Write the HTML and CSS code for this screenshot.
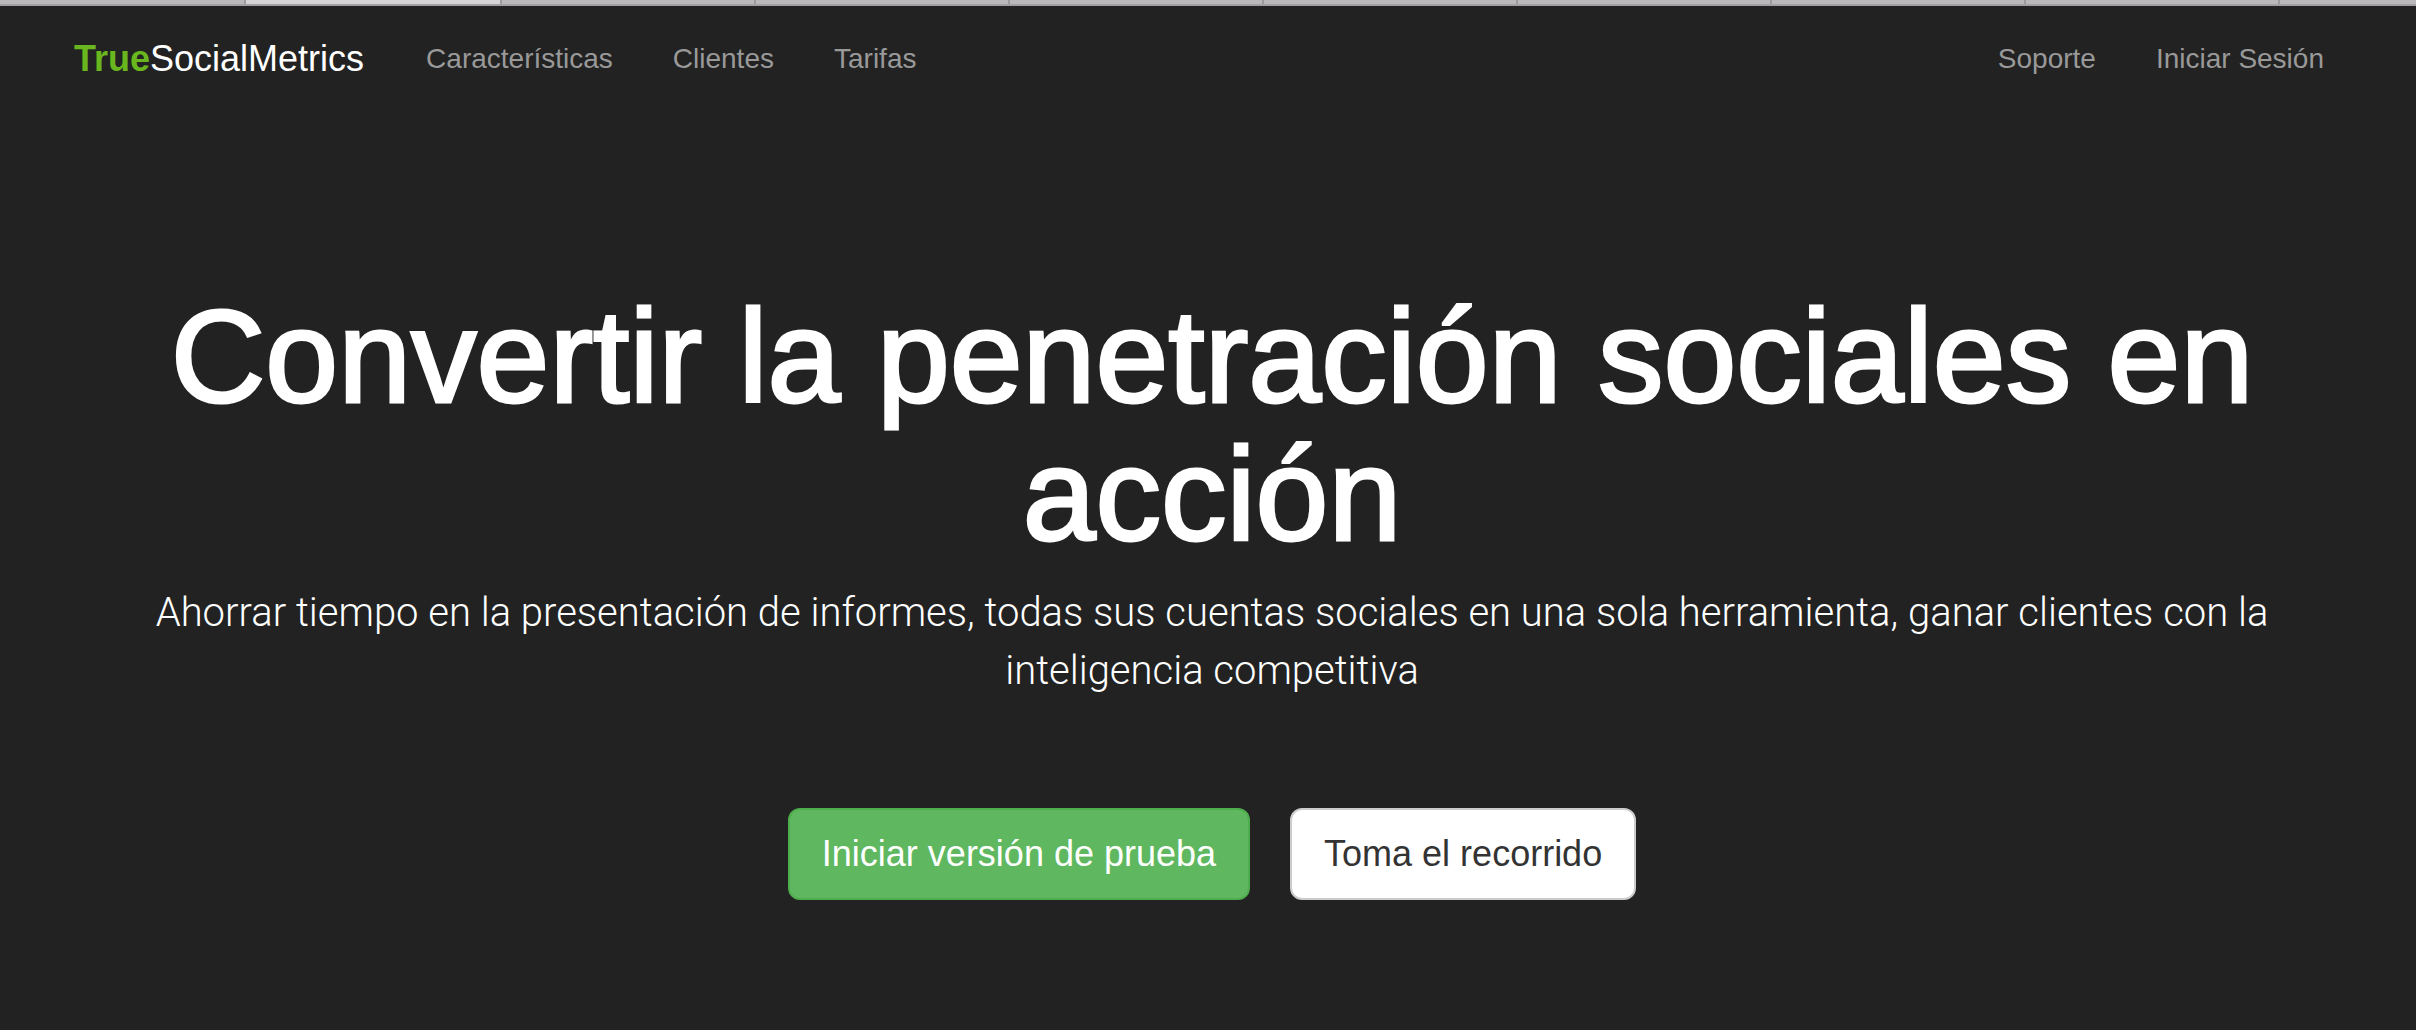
FILE: index.html
```html
<!DOCTYPE html>
<html lang="es">
<head>
    <meta charset="UTF-8">
    <meta name="viewport" content="width=device-width, initial-scale=1.0">
    <title>TrueSocialMetrics</title>
    <link rel="stylesheet" href="styles.css">
</head>
<body>

<div class="tabs">
    <span class="tab first"></span>
    <span class="tab active"></span>
    <span class="tab"></span>
    <span class="tab"></span>
    <span class="tab"></span>
    <span class="tab"></span>
    <span class="tab"></span>
    <span class="tab"></span>
    <span class="tab"></span>
    <span class="tab"></span>
</div>

<nav class="navbar">
    <a class="brand" href="#"><b>True</b>SocialMetrics</a>
    <a class="nav-link" href="#">Características</a>
    <a class="nav-link" href="#">Clientes</a>
    <a class="nav-link" href="#">Tarifas</a>
    <div class="nav-right">
        <a class="nav-link" href="#">Soporte</a>
        <a class="nav-link" href="#">Iniciar Sesión</a>
    </div>
</nav>

<main class="hero">
    <h1>Convertir la penetración sociales en acción</h1>
    <p class="lead">Ahorrar tiempo en la presentación de informes, todas sus cuentas sociales en una sola herramienta, ganar clientes con la inteligencia competitiva</p>
    <div class="actions">
        <button class="btn btn-success" type="button">Iniciar versión de prueba</button>
        <button class="btn btn-default" type="button">Toma el recorrido</button>
    </div>
</main>

</body>
</html>
```

FILE: styles.css
```css
body {
    margin: 0;
    background-color: #222;
    color: #fff;
    font-family: "Helvetica Neue", "Liberation Sans", Arial, sans-serif;
}

/* browser tab strip */
.tabs {
    display: flex;
    height: 4px;
    overflow: hidden;
    background-color: #bab8ba;
    border-bottom: 2px solid #a0a0a0;
}

.tab {
    flex: 0 0 254px;
    box-sizing: border-box;
    border-right: 2px solid #9c9a9c;
}

.tab.first {
    flex-basis: 246px;
}

.tab.active {
    flex-basis: 256px;
    background-color: #d6d4d6;
}

.navbar {
    display: flex;
    align-items: center;
    padding: 23px 62px 37px 74px;
    line-height: 60px;
}

.navbar a {
    text-decoration: none;
}

.brand {
    margin-right: 32px;
    font-size: 36px;
    color: #fff;
}

.brand b {
    color: #6ab61f;
}

.nav-link {
    padding: 0 30px;
    font-size: 28px;
    color: #999;
}

.nav-right {
    display: flex;
    margin-left: auto;
}

.hero {
    padding: 162px 116px 128px 124px;
    text-align: center;
}

.hero h1 {
    margin: 0;
    font-size: 131px;
    font-weight: 400;
    line-height: 138px;
    -webkit-text-stroke: 3px #fff;
}

.lead {
    margin: 20px 0 0;
    font-family: Roboto, sans-serif;
    font-size: 40px;
    font-weight: 300;
    line-height: 58px;
}

.actions {
    display: flex;
    justify-content: center;
    gap: 40px;
    margin-top: 108px;
}

.btn {
    padding: 20px 32px;
    border: 2px solid;
    border-radius: 12px;
    font-family: inherit;
    font-size: 36px;
    line-height: 48px;
    cursor: pointer;
}

.btn-success {
    background-color: #5fb860;
    border-color: #4eae4e;
    color: #fff;
}

.btn-default {
    background-color: #fff;
    border-color: #ccc;
    color: #333;
}
```
